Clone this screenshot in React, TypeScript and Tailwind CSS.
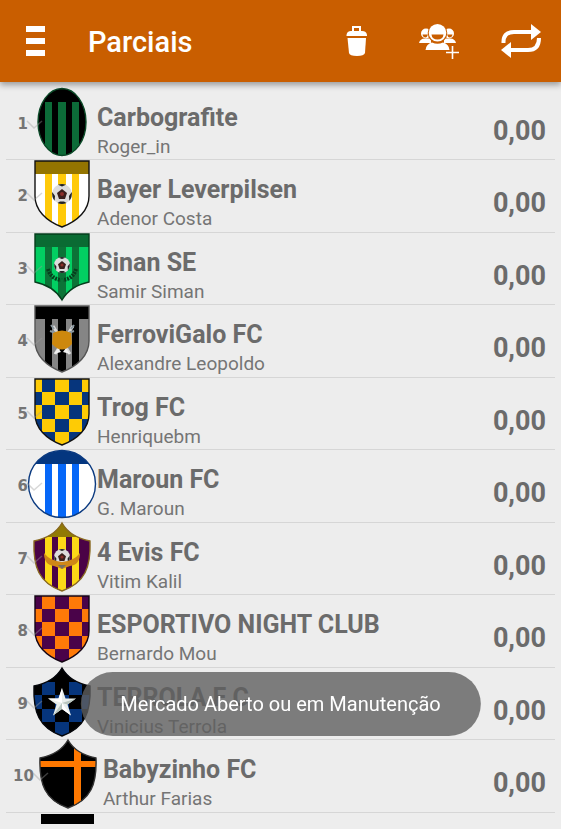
import { useState } from 'react';
import type { ReactNode } from 'react';

type Team = {
  pos: number;
  name: string;
  owner: string;
  score: string;
  crest: ReactNode;
};

const SHIELD = 'M7 1H61V36C61 50 50 61 34 67C18 61 7 50 7 36Z';
const POINTED = 'M7 1H61V49Q42 53 34 67Q26 53 7 49Z';
const WINGED = 'M34 0Q42 14 62 18C63 44 57 60 34 68C11 60 5 44 6 18Q26 14 34 0Z';
const OVAL = 'M34 0.5A24 33.5 0 0 1 34 67.5A24 33.5 0 0 1 34 0.5Z';
const ROUND = 'M34 0.5A33.5 33.5 0 0 1 34 67.5A33.5 33.5 0 0 1 34 0.5Z';

const CELLS = [0, 14, 27, 41, 54, 68];

function Stripes({ color }: { color: string }) {
  return (
    <g fill={color}>
      <rect x="17" y="14" width="7" height="54" />
      <rect x="30" y="14" width="8" height="54" />
      <rect x="44" y="14" width="7" height="54" />
    </g>
  );
}

function Checks({ even, odd }: { even: string; odd: string }) {
  return (
    <g>
      {CELLS.slice(0, 5).map((y, r) =>
        CELLS.slice(0, 5).map((x, c) => (
          <rect
            key={`${r}-${c}`}
            x={x}
            y={y}
            width={CELLS[c + 1] - x}
            height={CELLS[r + 1] - y}
            fill={(r + c) % 2 === 0 ? even : odd}
          />
        ))
      )}
    </g>
  );
}

function Ball({ cy = 34, r = 10 }: { cy?: number; r?: number }) {
  return (
    <g transform={`translate(34 ${cy}) scale(${r / 10})`}>
      <circle r="10" fill="#dcdcdc" />
      <path d="M0 -5L5 -1L3 5H-3L-5 -1Z" fill="#3a1f1c" />
      <circle r="2" fill="#8a2f2a" />
      <path
        d="M-4 -9.2Q0 -11 4 -9.2L0 -7.5ZM9.8 -2Q10.4 3 7.4 6.8L7 2ZM-9.8 -2Q-10.4 3 -7.4 6.8L-7 2ZM-4.5 9Q0 11 4.5 9L2 7.5H-2Z"
        fill="#222"
      />
    </g>
  );
}

function Crest({ id, shape, edge, children }: { id: string; shape: string; edge: string; children: ReactNode }) {
  return (
    <>
      <clipPath id={id}>
        <path d={shape} />
      </clipPath>
      <g clipPath={`url(#${id})`}>{children}</g>
      <path d={shape} fill="none" stroke={edge} strokeWidth="1.4" />
    </>
  );
}

const TEAMS: Team[] = [
  {
    pos: 1,
    name: 'Carbografite',
    owner: 'Roger_in',
    score: '0,00',
    crest: (
      <Crest id="c1" shape={OVAL} edge="#0b4a28">
        <rect width="68" height="68" fill="#000" />
        <Stripes color="#0c6b38" />
      </Crest>
    ),
  },
  {
    pos: 2,
    name: 'Bayer Leverpilsen',
    owner: 'Adenor Costa',
    score: '0,00',
    crest: (
      <Crest id="c2" shape={SHIELD} edge="#111">
        <rect width="68" height="68" fill="#fff" />
        <rect width="68" height="14" fill="#937400" />
        <Stripes color="#ffca0a" />
        <Ball />
      </Crest>
    ),
  },
  {
    pos: 3,
    name: 'Sinan SE',
    owner: 'Samir Siman',
    score: '0,00',
    crest: (
      <Crest id="c3" shape={POINTED} edge="#053d1c">
        <rect width="68" height="68" fill="#02cf62" />
        <rect width="68" height="14" fill="#0a6b33" />
        <Stripes color="#0c7337" />
        <Ball cy={32} r={8} />
        <path
          d="M20 36Q23 46 33 47M48 36Q45 46 35 47"
          fill="none"
          stroke="#063f1d"
          strokeWidth="4"
          strokeDasharray="2 1"
        />
      </Crest>
    ),
  },
  {
    pos: 4,
    name: 'FerroviGalo FC',
    owner: 'Alexandre Leopoldo',
    score: '0,00',
    crest: (
      <Crest id="c4" shape={SHIELD} edge="#555">
        <rect width="68" height="68" fill="#858585" />
        <rect width="68" height="14" fill="#000" />
        <Stripes color="#000" />
        <path d="M25 21L42 49M45 21L27 49" stroke="#d8d8d8" strokeWidth="3" />
        <path d="M22 26L28 28M23 20L26 24M46 26L40 28M46 20L43 24" stroke="#8b98a0" strokeWidth="2" />
        <path d="M26 49L30 43L33 47ZM42 49L38 43L35 47Z" fill="#f1f1f1" />
        <path d="M25 28Q34 23 43 28L44 39Q34 50 24 39Z" fill="#cd880d" />
      </Crest>
    ),
  },
  {
    pos: 5,
    name: 'Trog FC',
    owner: 'Henriquebm',
    score: '0,00',
    crest: (
      <Crest id="c5" shape={SHIELD} edge="#111">
        <Checks even="#fecb05" odd="#06357c" />
      </Crest>
    ),
  },
  {
    pos: 6,
    name: 'Maroun FC',
    owner: 'G. Maroun',
    score: '0,00',
    crest: (
      <Crest id="c6" shape={ROUND} edge="#0b3a80">
        <rect width="68" height="68" fill="#fff" />
        <rect width="68" height="14" fill="#04367f" />
        <Stripes color="#0667f8" />
      </Crest>
    ),
  },
  {
    pos: 7,
    name: '4 Evis FC',
    owner: 'Vitim Kalil',
    score: '0,00',
    crest: (
      <Crest id="c7" shape={WINGED} edge="#8a6a20">
        <rect width="68" height="68" fill="#4b0346" />
        <rect width="68" height="14" fill="#917a05" />
        <Stripes color="#fcd817" />
        <Ball r={8} />
        <path d="M16 30Q22 38 34 39Q46 38 52 30Q52 42 42 43L34 46L26 43Q16 42 16 30Z" fill="#cf8717" />
        <path d="M30 42H38L34 46Z" fill="#77705f" />
      </Crest>
    ),
  },
  {
    pos: 8,
    name: 'ESPORTIVO NIGHT CLUB',
    owner: 'Bernardo Mou',
    score: '0,00',
    crest: (
      <Crest id="c8" shape={SHIELD} edge="#140414">
        <Checks even="#4a0349" odd="#ff7a08" />
      </Crest>
    ),
  },
  {
    pos: 9,
    name: 'TERROLA F C',
    owner: 'Vinicius Terrola',
    score: '0,00',
    crest: (
      <Crest id="c9" shape={WINGED} edge="#05070c">
        <Checks even="#06357c" odd="#000" />
        <path d="M20 0H48V14H20Z" fill="#000" />
        <path d="M34 20L37.5 30.5H48L39.5 36.5L43 47.5L34 41L25 47.5L28.5 36.5L20 30.5H30.5Z" fill="#e9efec" />
        <path d="M34 20V35L20 30.5H30.5ZM34 35L43 47.5L34 41Z" fill="#fff" />
        <path d="M34 35L48 30.5L39.5 36.5ZM34 35L25 47.5L34 41Z" fill="#b9c6bf" />
      </Crest>
    ),
  },
  {
    pos: 10,
    name: 'Babyzinho FC',
    owner: 'Arthur Farias',
    score: '0,00',
    crest: (
      <Crest id="c10" shape={WINGED} edge="#333">
        <rect width="68" height="68" fill="#000" />
        <rect y="21" width="68" height="6" fill="#ff7800" />
        <rect x="40" width="7" height="68" fill="#ff7800" />
      </Crest>
    ),
  },
];

function MenuIcon() {
  return (
    <svg width="20" height="30" viewBox="0 0 20 30" fill="#fff" aria-hidden="true">
      <rect y="0" width="19" height="6" />
      <rect y="12" width="19" height="6" />
      <rect y="24" width="19" height="6" />
    </svg>
  );
}

function TrashIcon() {
  return (
    <svg width="22" height="30" viewBox="0 0 22 30" aria-hidden="true">
      <path d="M7 6V1H14V6" fill="none" stroke="#fff" strokeWidth="2" />
      <path d="M0.500 9Q1 5 5 5H16Q20.500 5 21 9V10H0.500Z" fill="#fff" />
      <path d="M1.500 12H20L19 27Q18 30 11 30Q3.500 30 3 27Z" fill="#fff" />
    </svg>
  );
}

function GroupAddIcon() {
  return (
    <svg width="40" height="35" viewBox="0 0 40 35" aria-hidden="true">
      <g fill="#fff">
        <circle cx="7" cy="9.5" r="5" />
        <circle cx="30" cy="9.5" r="5" />
        <path d="M0 19Q1 14.5 6 14.5H12V19ZM37 19Q36 14.5 31 14.5H25V19Z" />
      </g>
      <path
        d="M3.5 10.5H9Q8 13.5 6.5 13.5Q4 13.5 3.5 10.5ZM28 10.5H33.5Q33 13.5 30.5 13.5Q29 13.5 28 10.5Z"
        fill="#c95e00"
      />
      <circle cx="18.5" cy="9" r="9.8" fill="#c95e00" />
      <circle cx="18.5" cy="8.8" r="8.8" fill="#fff" />
      <path d="M12.5 10.5H24.5Q24 15.5 18.5 15.5Q13 15.5 12.5 10.5Z" fill="#c95e00" />
      <path d="M6.5 26Q7 20 13 18.5Q18.5 21 24 18.5Q30 20 30.5 26Z" fill="#fff" />
      <path d="M33.5 22V35M27 28.5H40" stroke="#c95e00" strokeWidth="3.5" />
      <path d="M33.5 22V35M27 28.5H40" stroke="#fff" strokeWidth="1.6" />
    </svg>
  );
}

function RepeatIcon() {
  return (
    <svg width="40" height="34" viewBox="0 0 40 34" fill="none" aria-hidden="true">
      <path d="M2.5 19Q2 8 13 8H31" stroke="#fff" strokeWidth="4" />
      <path d="M30 0L40 8L30 16Z" fill="#fff" />
      <path d="M38 14Q38 26 27 26H9" stroke="#fff" strokeWidth="4" />
      <path d="M10 18L0 26L10 34Z" fill="#fff" />
    </svg>
  );
}

function TeamRow({ team }: { team: Team }) {
  return (
    <li className="flex h-[72px] even:h-[73px] items-start border-b border-[#d6d6d6] pl-[7px] pr-[9px]">
      <span className="min-w-[15px] pt-[26px] text-right font-['DejaVu_Sans'] text-[15px] leading-5 font-bold text-[#757575]">
        {team.pos}
      </span>
      <svg width="68" height="68" viewBox="0 0 68 68" className="shrink-0 overflow-visible" aria-hidden="true">
        {team.crest}
        <path d="M-1 33L6 40L14 33" fill="none" stroke="#9a9a9a" strokeOpacity="0.4" strokeWidth="1.5" />
      </svg>
      <div className="ml-px min-w-0 flex-1 pt-[15px]">
        <h2 className="truncate text-[25px] leading-[30px] font-bold text-[#6b6b6b]">{team.name}</h2>
        <p className="truncate text-[19px] leading-7 text-[#757575]">{team.owner}</p>
      </div>
      <span className="pt-[27px] text-[27px] leading-8 font-bold text-[#6b6b6b]">{team.score}</span>
    </li>
  );
}

export default function App() {
  const [teams, setTeams] = useState(TEAMS);

  return (
    <div className="min-h-screen bg-[#ededed] font-[Roboto,sans-serif]">
      <header className="relative flex h-[82px] items-center bg-[#c95e00] pl-[26px] pr-5 text-white shadow-[0_3px_6px_rgba(0,0,0,0.35)]">
        <button type="button" aria-label="Menu">
          <MenuIcon />
        </button>
        <h1 className="ml-10 flex-1 pt-0.5 pl-0.5 text-[29px] leading-9 font-medium">Parciais</h1>
        <div className="flex items-center">
          <button type="button" aria-label="Limpar" onClick={() => setTeams([])}>
            <TrashIcon />
          </button>
          <button type="button" aria-label="Adicionar time" className="ml-[51px]">
            <GroupAddIcon />
          </button>
          <button type="button" aria-label="Atualizar" className="ml-[42px]" onClick={() => setTeams(TEAMS)}>
            <RepeatIcon />
          </button>
        </div>
      </header>

      <main className="px-[6px] pt-[6px]">
        <ul>
          {teams.map((team) => (
            <TeamRow key={team.pos} team={team} />
          ))}
        </ul>
        {/* top edge of the next crest */}
        <svg width="53" height="10" viewBox="0 0 53 10" className="ml-[35px] mt-px" aria-hidden="true">
          <rect width="53" height="10" fill="#000" />
        </svg>
      </main>

      <div
        role="status"
        className="fixed bottom-[93px] left-1/2 flex h-16 -translate-x-1/2 items-center rounded-full bg-[#5f5f5f]/80 px-10 text-[20px] leading-7 whitespace-nowrap text-white"
      >
        Mercado Aberto ou em Manutenção
      </div>
    </div>
  );
}
